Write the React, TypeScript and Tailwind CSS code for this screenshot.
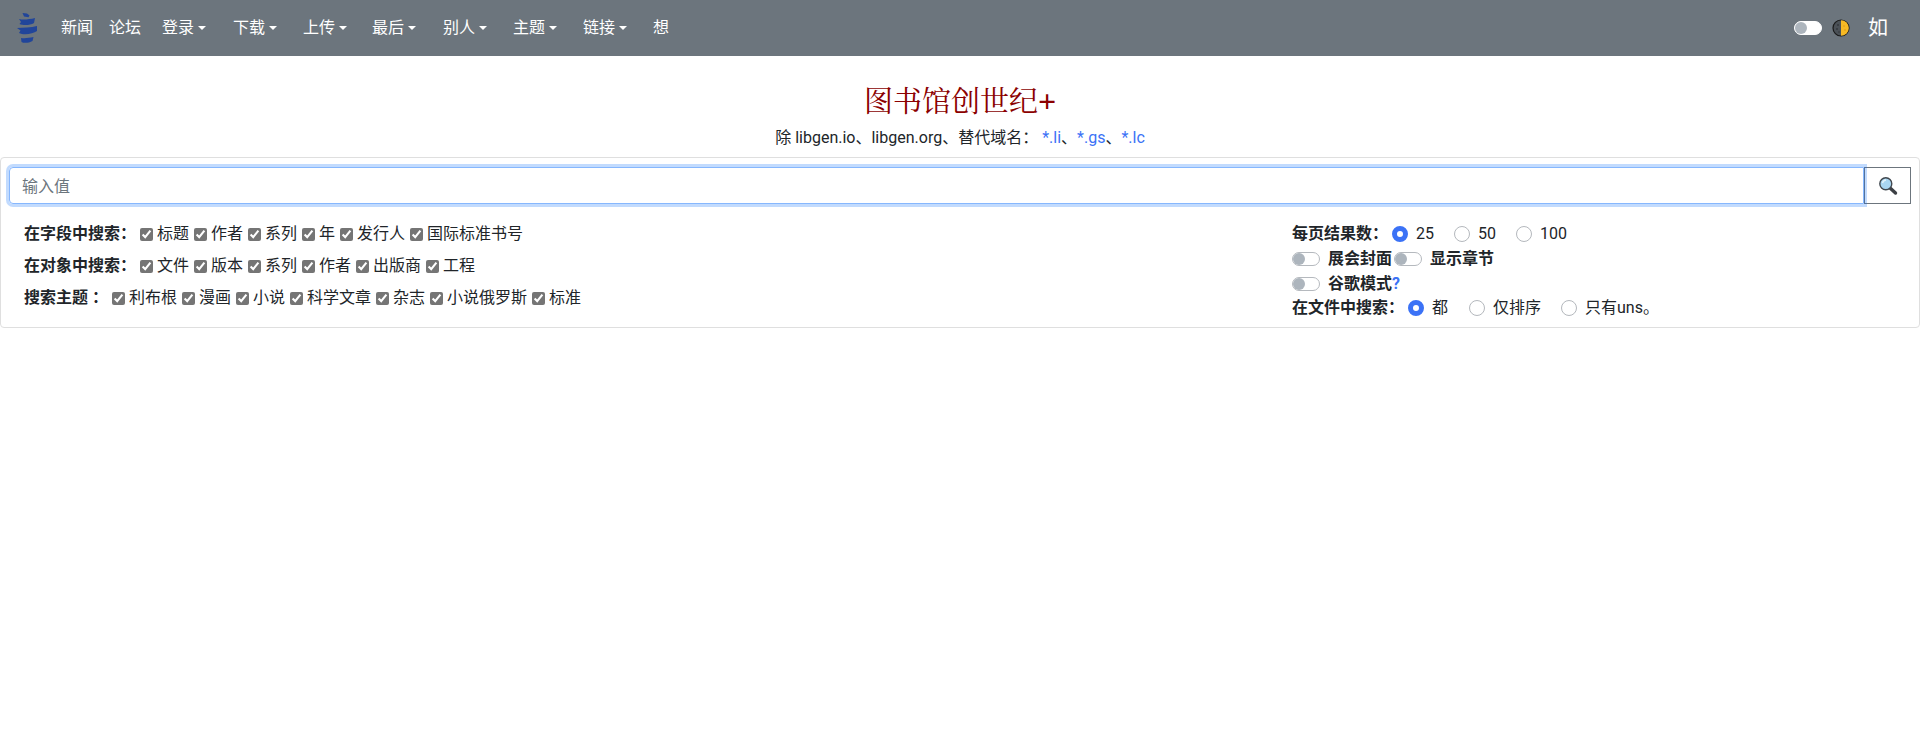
import React from "react";

const FONT = "font-['Roboto','Noto_Sans_CJK_SC',sans-serif]";

function Logo() {
  return (
    <svg width="24" height="32" viewBox="0 0 24 32" className="shrink-0">
      <path d="M8.5 1 L13 1.5 L15.5 3.5 L14.5 5.2 L10 4.5 Z" fill="#21459a" />
      <path d="M5 7 C9 8 15 7.5 21 6 L20 11 C16 13.5 9 13.5 5.5 12 L7 10 Z" fill="#21459a" />
      <path d="M3 16 C9 15.5 17 15.5 23 14 L23 19 C19 22 10 23.5 5 21 L6.5 18.5 Z" fill="#21459a" />
      <path d="M7 26 C11 26.5 15 26 19.5 25 L18.5 29 C15 31 10 31.5 7.5 30 Z" fill="#21459a" />
    </svg>
  );
}

function Moon() {
  return (
    <svg width="18" height="18" viewBox="0 0 18 18">
      <circle cx="9" cy="9" r="8" fill="#4b5157" stroke="#1a1a1a" strokeWidth="1.2" />
      <path d="M9 1.2 A7.8 7.8 0 0 1 9 16.8 Z" fill="#f7b924" />
      <circle cx="6" cy="6" r="1" fill="#33383c" />
      <circle cx="5" cy="10" r="1" fill="#33383c" />
      <circle cx="7" cy="13" r="0.8" fill="#33383c" />
      <circle cx="12" cy="7" r="0.7" fill="#d9940f" />
      <circle cx="13" cy="11" r="0.8" fill="#d9940f" />
    </svg>
  );
}

function Magnifier() {
  return (
    <svg width="20" height="20" viewBox="0 0 20 20">
      <path d="M11.5 11.5 L17.5 17" stroke="#3c3f44" strokeWidth="3.4" strokeLinecap="round" />
      <circle cx="7.8" cy="7.8" r="6" fill="#a9d6f2" stroke="#41484f" strokeWidth="1.4" />
      <path d="M4.5 7 A4 4 0 0 1 8 4" stroke="#e3f4fd" strokeWidth="1.4" fill="none" />
    </svg>
  );
}

function Toggle({ light = false }: { light?: boolean }) {
  return (
    <span
      className={
        light
          ? "flex h-[14px] w-[28px] items-center rounded-full border border-white bg-white shrink-0"
          : "flex h-[14px] w-[28px] items-center rounded-full border border-[#b5b9be] bg-white shrink-0"
      }
    >
      <span className="h-[12px] w-[12px] rounded-full bg-[#adb5bd]" />
    </span>
  );
}

function Check({ label }: { label: string }) {
  return (
    <label className="flex items-center gap-[4px] mr-[5px]">
      <input
        type="checkbox"
        defaultChecked
        className="m-0 h-[13px] w-[13px] shrink-0 accent-[#757575]"
      />
      <span>{label}</span>
    </label>
  );
}

function Radio({ label, on = false, gap }: { label: string; on?: boolean; gap: string }) {
  return (
    <label className={`flex items-center gap-[8px] ${gap}`}>
      {on ? (
        <span className="h-[16px] w-[16px] shrink-0 rounded-full border-[5px] border-[#3b72f6] bg-white" />
      ) : (
        <span className="h-[16px] w-[16px] shrink-0 rounded-full border border-[#b4b8bd] bg-white" />
      )}
      <span>{label}</span>
    </label>
  );
}

function Menu({ label, width }: { label: string; width: string }) {
  return (
    <a className={`flex ${width} shrink-0 items-center text-white`}>
      <span>{label}</span>
      <span className="ml-[4px] h-0 w-0 border-x-[4px] border-t-[4px] border-x-transparent border-t-white" />
    </a>
  );
}

function CheckRow({ title, items }: { title: string; items: string[] }) {
  return (
    <div className="flex h-[32px] items-center">
      <b className="mr-[4px] font-bold">{title}</b>
      {items.map((i) => (
        <Check key={i} label={i} />
      ))}
    </div>
  );
}

const MENUS: [string, string][] = [
  ["登录", "w-[71px]"],
  ["下载", "w-[70px]"],
  ["上传", "w-[69px]"],
  ["最后", "w-[71px]"],
  ["别人", "w-[70px]"],
  ["主题", "w-[70px]"],
  ["链接", "w-[70px]"],
];

export default function App() {
  return (
    <div className={`${FONT} min-h-[751px] bg-white text-[16px] leading-[24px] text-[#212529]`}>
      <nav className="flex h-[56px] items-center bg-[#6c757d] pl-[14px] pr-[32px]">
        <Logo />
        <a className="ml-[23px] text-white">新闻</a>
        <a className="ml-[16px] text-white">论坛</a>
        <div className="ml-[21px] flex">
          {MENUS.map(([m, w]) => (
            <Menu key={m} label={m} width={w} />
          ))}
        </div>
        <a className="text-white">想</a>
        <div className="ml-auto flex items-center">
          <Toggle light />
          <span className="ml-[10px] flex">
            <Moon />
          </span>
          <span className="ml-[18px] text-[20px] text-white">如</span>
        </div>
      </nav>

      <header className="flex h-[101px] flex-col items-center">
        <h1 className="mt-[28px] h-[36px] font-['Liberation_Serif','Noto_Serif_CJK_SC','Noto_Sans_CJK_SC',serif] text-[29px] leading-[36px] text-[#8b0000]">
          图书馆创世纪<span className="text-[32px] leading-none font-bold">+</span>
        </h1>
        <p className="mt-[6px]">
          除 libgen.io、libgen.org、替代域名：{" "}
          <a className="text-[#3b72f6]">*.li</a>、<a className="text-[#3b72f6]">*.gs</a>、
          <a className="text-[#3b72f6]">*.lc</a>
        </p>
      </header>

      <section className="h-[171px] rounded-[4px] border border-[#dfdfdf] px-[8px] pt-[9px]">
        <div className="flex h-[37px]">
          <input
            placeholder="输入值"
            className="relative z-10 h-full flex-1 rounded-l-[4px] border border-[#86b7fe] px-[12px] pt-[2px] shadow-[0_0_0_3px_rgba(13,110,253,0.25)] outline-none placeholder:text-[#6c757d]"
          />
          <button className="flex h-full w-[47px] items-center justify-center border border-[#6c757d]">
            <Magnifier />
          </button>
        </div>
        <div className="mt-[14px] flex">
          <div className="w-[1283px] pl-[15px]">
            <CheckRow title="在字段中搜索：" items={["标题", "作者", "系列", "年", "发行人", "国际标准书号"]} />
            <CheckRow title="在对象中搜索：" items={["文件", "版本", "系列", "作者", "出版商", "工程"]} />
            <CheckRow title="搜索主题 ：" items={["利布根", "漫画", "小说", "科学文章", "杂志", "小说俄罗斯", "标准"]} />
          </div>
          <div className="pt-[4px]">
            <div className="flex h-[24px] items-center">
              <b className="mr-[4px]">每页结果数：</b>
              <Radio label="25" on gap="mr-[20px]" />
              <Radio label="50" gap="mr-[20px]" />
              <Radio label="100" gap="" />
            </div>
            <div className="flex h-[26px] items-center">
              <Toggle />
              <b className="ml-[8px] mr-[2px]">展会封面</b>
              <Toggle />
              <b className="ml-[8px]">显示章节</b>
            </div>
            <div className="flex h-[24px] items-center">
              <Toggle />
              <b className="ml-[8px]">谷歌模式</b>
              <b className="text-[#3b72f6]">?</b>
            </div>
            <div className="flex h-[24px] items-center">
              <b className="mr-[4px]">在文件中搜索：</b>
              <Radio label="都" on gap="mr-[21px]" />
              <Radio label="仅排序" gap="mr-[20px]" />
              <Radio label="只有uns。" gap="" />
            </div>
          </div>
        </div>
      </section>
    </div>
  );
}
